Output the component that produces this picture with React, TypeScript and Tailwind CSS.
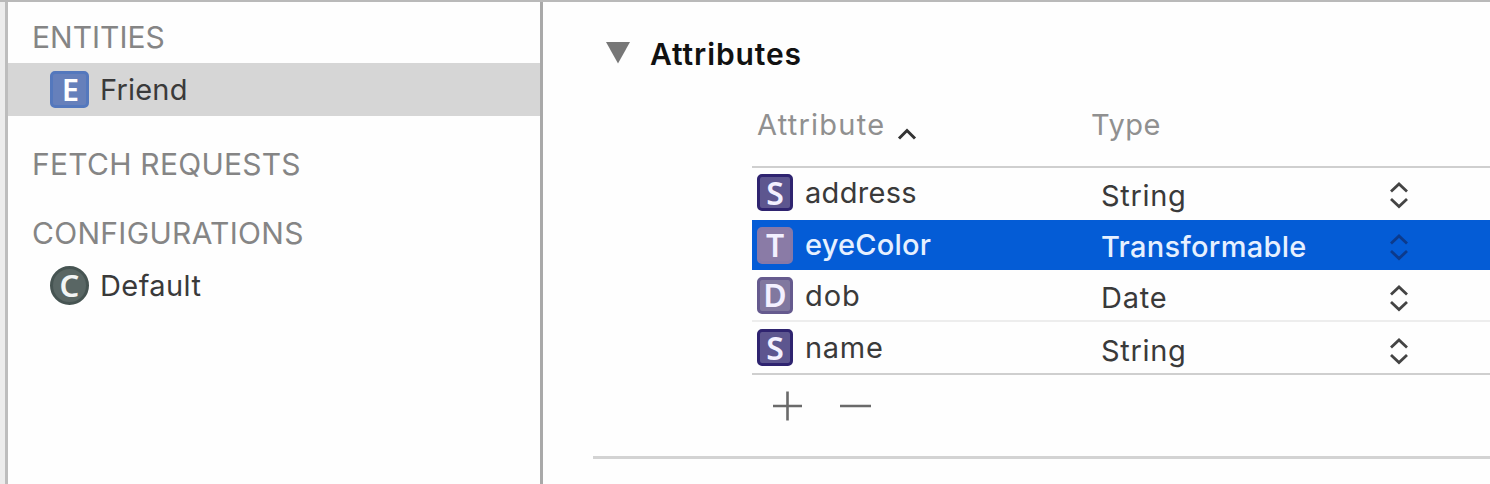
import React from "react";

type Attribute = {
  letter: string;
  name: string;
  nameClass: string;
  type: string;
  typeClass: string;
  badge: string;
  row: string;
  stepper: string;
  selected?: boolean;
};

const attributes: Attribute[] = [
  { letter: "S", name: "address", nameClass: "tracking-[0.3px] pt-px", type: "String", typeClass: "tracking-[0.7px] pt-[6px]", badge: "bg-[#5d568f] border-[#2f2470]", row: "h-[52px] pb-[3px]", stepper: "mt-[5px]" },
  { letter: "T", name: "eyeColor", nameClass: "tracking-[0.2px]", type: "Transformable", typeClass: "tracking-[0.3px] pt-[4px]", badge: "bg-[#8a7ba6] border-[#8578a8]", row: "h-[50px]", stepper: "mt-[4px]", selected: true },
  { letter: "D", name: "dob", nameClass: "tracking-[0.9px] pt-[2px]", type: "Date", typeClass: "tracking-[0.8px] pt-[6px]", badge: "bg-[#81789f] border-[#655a8e]", row: "h-[52px] border-b-2 border-[#ededed]", stepper: "mt-[6px]" },
  { letter: "S", name: "name", nameClass: "tracking-[0.7px] pt-px", type: "String", typeClass: "tracking-[0.7px] pt-[6px]", badge: "bg-[#5d568f] border-[#2f2470]", row: "h-[51px]", stepper: "mt-[6px]" },
];

function Stepper({ selected, className }: { selected?: boolean; className: string }) {
  return (
    <svg width="20" height="28" viewBox="0 0 20 28" fill="none" stroke={selected ? "#0c3a8c" : "#444"} strokeWidth="2.8" className={`shrink-0 ${className}`}>
      <path d="M2 10.500 10 3l8 7.500M2 18l8 7.500 8-7.500" />
    </svg>
  );
}

function Badge({ letter, className }: { letter: string; className: string }) {
  return (
    <span className={`flex h-[37px] w-[36px] shrink-0 items-center justify-center rounded-[5px] border-[3px] font-['Noto_Sans',sans-serif] text-[32px] leading-none font-semibold text-[#f3f0ff] ${className}`}>
      {letter}
    </span>
  );
}

export default function App() {
  return (
    <div className="flex h-[484px] w-[1490px] overflow-hidden border-t-2 border-[#b9b9b9] bg-[#fefefe] font-['Inter',sans-serif] text-[29px] text-[#3a3a3a]">
      <div className="w-[8px] shrink-0 border-r-[3px] border-[#bdbdbd] bg-[#ececec]" />
      <aside className="w-[535px] shrink-0 border-r-[3px] border-[#a9a9a9] whitespace-nowrap">
        <h2 className="h-[61px] pt-[9px] pl-[24px] text-[30px] leading-[52px] text-[#858585]">ENTITIES</h2>
        <div className="flex h-[53px] items-center bg-[#d6d6d6] pl-[42px]">
          <span className="mr-[11px] flex h-[37px] w-[39px] items-center justify-center rounded-[5px] border-[3px] border-[#5478bd] bg-[#6680bb] pl-[2px] pb-px font-['Noto_Sans',sans-serif] text-[31px] leading-none font-semibold text-white">E</span>
          <span className="tracking-[0.2px]">Friend</span>
        </div>
        <h2 className="mt-[22px] pl-[24px] text-[30px] leading-[52px] tracking-[0.25px] text-[#858585]">FETCH REQUESTS</h2>
        <h2 className="mt-[17px] pl-[24px] text-[30px] leading-[52px] tracking-[0.3px] text-[#858585]">CONFIGURATIONS</h2>
        <div className="flex h-[53px] items-center pl-[42px]">
          <span className="mr-[11px] flex size-[39px] items-center justify-center rounded-full border-[3px] border-[#465452] bg-[#596664] font-['Noto_Sans',sans-serif] text-[31px] leading-none font-semibold text-[#f2f5f5]">C</span>
          <span className="pt-px tracking-[0.4px]">Default</span>
        </div>
      </aside>
      <main className="min-w-0 flex-1 whitespace-nowrap">
        <div className="flex h-[104px] items-center pl-[63px]">
          <svg width="24" height="22" viewBox="0 0 24 22" className="mr-[20px] mb-[2px]">
            <path d="M0 0h24L12 21.500z" fill="#777" />
          </svg>
          <h1 className="text-[30px] font-semibold tracking-[0.9px] text-[#111]">Attributes</h1>
        </div>
        <section className="ml-[209px]">
          <div className="flex h-[62px] border-b-2 border-[#cfcfcf] pl-[5px] leading-[38px] text-[#909090]">
            <div className="flex w-[334px]">
              <span className="w-[129px] tracking-[1.25px]">Attribute</span>
              <svg width="20" height="14" viewBox="0 0 20 14" fill="none" stroke="#333" strokeWidth="3" className="mt-[21px] ml-[11px]">
                <path d="m2 11.500 8-8 8 8" />
              </svg>
            </div>
            <span className="tracking-[0.5px]">Type</span>
          </div>
          {attributes.map((a) => (
            <div key={a.name} className={`flex items-center pl-[5px] ${a.row} ${a.selected ? "bg-[#045cd6] font-medium text-[#e6f0ff]" : ""}`}>
              <Badge letter={a.letter} className={a.badge} />
              <span className={`ml-[12px] w-[297px] ${a.nameClass}`}>{a.name}</span>
              <span className={`-ml-px w-[288px] ${a.typeClass}`}>{a.type}</span>
              <Stepper selected={a.selected} className={a.stepper} />
            </div>
          ))}
          <div className="flex h-[83px] border-t-2 border-[#cfcfcf] pt-[16px] pl-[20px]">
            <svg width="100" height="30" viewBox="0 0 100 30" stroke="#6a6a6a" strokeWidth="2.6">
              <path d="M1 15h29M15.500 .5v29M68 15h31" />
            </svg>
          </div>
        </section>
        <div className="ml-[50px] h-[3px] bg-[#d3d3d3]" />
      </main>
    </div>
  );
}
